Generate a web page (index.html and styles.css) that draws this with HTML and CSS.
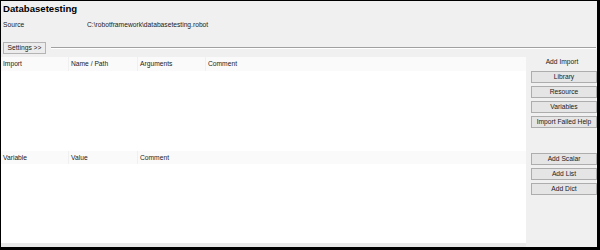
FILE: index.html
```html
<!DOCTYPE html>
<html>
<head>
<meta charset="utf-8">
<link rel="stylesheet" href="styles.css">
</head>
<body>
<div class="window">
  <div class="head">
    <div class="title">Databasetesting</div>
    <div class="source">
      <span class="label">Source</span>
      <span class="path">C:\robotframework\databasetesting.robot</span>
    </div>
  </div>
  <div class="settings-row">
    <button class="settings">Settings &gt;&gt;</button>
    <div class="rule"></div>
  </div>
  <div class="main">
    <div class="tables">
      <div class="table imports">
        <div class="thead">
          <div class="th">Import</div>
          <div class="th">Name / Path</div>
          <div class="th">Arguments</div>
          <div class="th">Comment</div>
        </div>
        <div class="tbody"></div>
      </div>
      <div class="table vars">
        <div class="thead">
          <div class="th">Variable</div>
          <div class="th">Value</div>
          <div class="th">Comment</div>
        </div>
        <div class="tbody"></div>
      </div>
    </div>
    <div class="side">
      <div class="group imports-group">
        <div class="group-label">Add Import</div>
        <button class="btn">Library</button>
        <button class="btn">Resource</button>
        <button class="btn">Variables</button>
        <button class="btn">Import Failed Help</button>
      </div>
      <div class="group vars-group">
        <button class="btn">Add Scalar</button>
        <button class="btn">Add List</button>
        <button class="btn">Add Dict</button>
      </div>
    </div>
  </div>
</div>
</body>
</html>
```

FILE: styles.css
```css
* { box-sizing: border-box; }
html, body { margin: 0; padding: 0; }
body {
  width: 600px;
  height: 250px;
  overflow: hidden;
  font-family: "Liberation Sans", Arial, sans-serif;
  font-size: 6.7px;
  color: #1a1a1a;
}
.window {
  width: 600px;
  height: 250px;
  border-top: 1px solid #000;
  border-left: 1px solid #000;
  border-right: 3px solid #000;
  border-bottom: 3px solid #000;
  background: #f0f0f0;
  display: flex;
  flex-direction: column;
  overflow: hidden;
}
.head {
  height: 40px;
  padding: 2px 0 0 2px;
}
.title {
  font-weight: bold;
  font-size: 9.6px;
  line-height: 12px;
  height: 12px;
  color: #000;
}
.source {
  display: flex;
  margin-top: 5px;
  line-height: 10px;
}
.source .label { width: 84px; }
.settings-row {
  height: 12px;
  margin-top: 1px;
  display: flex;
  align-items: center;
  padding-left: 2px;
}
.settings {
  font: inherit;
  height: 12px;
  width: 43px;
  padding: 0;
  margin: 0;
  border: 1px solid #b4b4b4;
  background: #ececec;
  color: #1a1a1a;
  line-height: 10px;
}
.rule {
  flex: 1;
  height: 2px;
  margin-left: 5px;
  margin-right: 1px;
  border-top: 1px solid #a0a0a0;
  border-bottom: 1px solid #fff;
}
.main {
  flex: 1;
  display: flex;
  margin-top: 3px;
}
.tables {
  width: 525px;
  display: flex;
  flex-direction: column;
  background: #fff;
  border-bottom: 4px solid #e9e9e9;
}
.table { display: flex; flex-direction: column; }
.imports { height: 94px; }
.vars { flex: 1; }
.thead {
  display: grid;
  grid-template-columns: 67px 69px 68px 1fr;
  background: #fafafa;
  height: 14px;
  line-height: 14px;
}
.vars .thead { height: 13px; line-height: 13px; }
.th {
  padding-left: 2px;
  border-left: 1px solid #f0f0f0;
  white-space: nowrap;
}
.th:first-child { border-left: none; }
.tbody { flex: 1; background: #fff; }
.side {
  flex: 1;
  display: flex;
  flex-direction: column;
  padding-left: 5px;
}
.group { display: flex; flex-direction: column; }
.imports-group { height: 96px; }
.group-label {
  height: 12px;
  line-height: 10px;
  text-align: center;
  margin-bottom: 2px;
  padding-right: 4px;
}
.btn {
  font: inherit;
  color: #1a1a1a;
  height: 12px;
  margin: 0 0 3px 0;
  padding: 0;
  border: 1px solid #adadad;
  background: #e5e5e5;
  line-height: 10px;
  text-align: center;
  width: 100%;
}
```
